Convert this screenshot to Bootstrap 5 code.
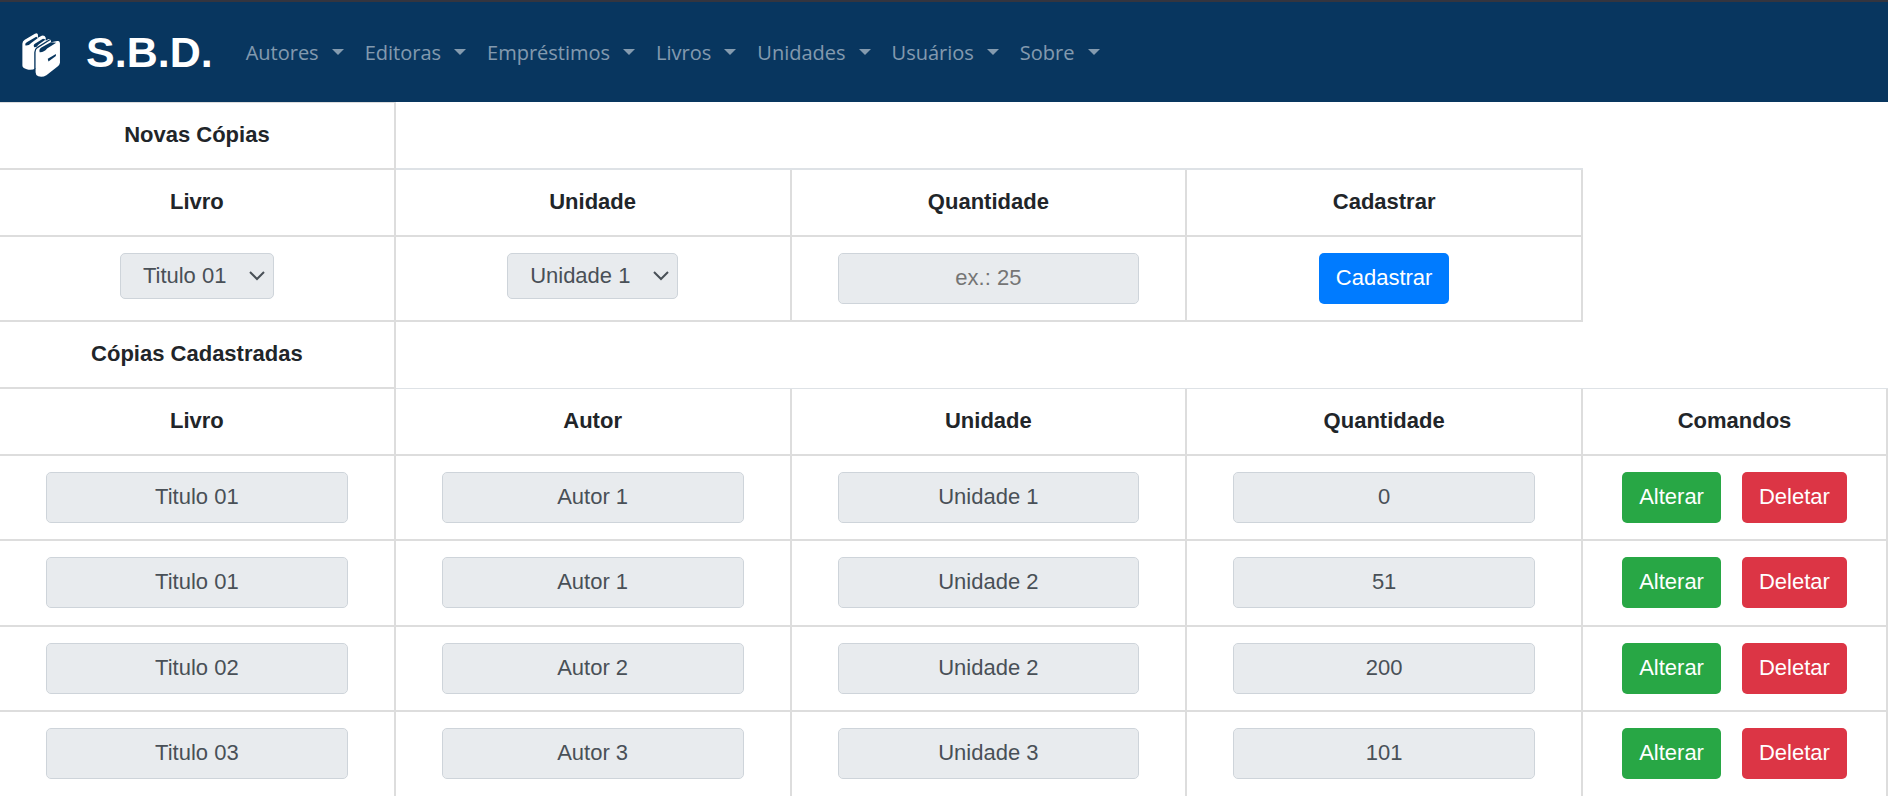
<!DOCTYPE html>
<html lang="pt-BR">
<head>
<meta charset="utf-8">
<meta name="viewport" content="width=device-width, initial-scale=1">
<title>S.B.D. - Cópias</title>
<link href="https://cdn.jsdelivr.net/npm/bootstrap@5.3.0/dist/css/bootstrap.min.css" rel="stylesheet">
<style>
  body { font-family: "Liberation Sans", Arial, sans-serif; font-size: 22px; line-height: 33px; color: #212529; overflow-x: hidden; }

  .sbd-nav { background: #08365f; border-top: 2px solid #34353f; padding: 0 22px; min-height: 102px; }
  .sbd-nav .navbar-brand { color: #fff; font-size: 43px; font-weight: 700; line-height: 48px; gap: 26px; margin-right: 25px; padding: 0 0 1px; }
  .sbd-nav .marca { margin-top: 6px; }
  .sbd-nav .navbar-nav { column-gap: 5px; }
  .sbd-nav .nav-link { font-family: "Open Sans", "Segoe UI", sans-serif; font-size: 20px; line-height: 32px; color: rgba(255, 255, 255, .5); padding: 10px 8px 8px; }
  .sbd-nav .dropdown-toggle::after { border-top-width: 6px; border-right-width: 6px; border-left-width: 6px; margin-left: 13px; vertical-align: 5px; }

  .copias { width: 100%; table-layout: fixed; border-collapse: separate; border-spacing: 0; text-align: center; }
  .copias .comandos { width: 305px; }
  .copias th, .copias td { padding: 16px 0; border: 0 solid #ddd; border-width: 0 2px 2px 0; vertical-align: top; }
  .copias th { padding: 15px 0 17px; }
  .copias .campo { padding: 16px 46px; }
  .copias .registros tr:nth-child(even) td { padding-bottom: 17px; }
  .copias .topo { border-top-width: 1px; }
  .copias .vazio { border-width: 0; }
  .copias .linha { border-width: 0 0 2px; border-color: #dee2e6; }
  .copias .linha-fina { border-width: 0 0 1px; border-color: #dee2e6; }

  .copias .form-control, .copias .form-select { font-size: 22px; color: #495057; background-color: #e8ebee; border: 1px solid #ced4da; border-radius: 5px; }
  .copias .form-control { height: 51px; padding: 0 16px 1px; text-align: center; }
  .copias .form-control::placeholder { color: #757575; }
  .copias .form-select { width: auto; height: 46px; margin: 0 auto; padding: 0 46px 1px 22px; line-height: 33px;
    background-image: url("data:image/svg+xml,%3Csvg xmlns='http://www.w3.org/2000/svg' viewBox='0 0 16 10'%3E%3Cpath d='M1 1l7 7 7-7' fill='none' stroke='%23495057' stroke-width='2'/%3E%3C/svg%3E");
    background-size: 16px 10px; background-position: right 8px center; }
  .copias .btn { height: 51px; padding: 0 16px 2px; border: 1px solid transparent; border-radius: 5px; font-size: 22px; line-height: 33px; color: #fff; }
  .copias .btn-cadastrar { background: #007bff; }
  .copias .btn-alterar { background: #28a745; }
  .copias .btn-deletar { background: #dc3545; }
  .acoes { gap: 21px; }
</style>
</head>
<body>
<nav class="navbar navbar-expand-lg sbd-nav">
  <a class="navbar-brand d-flex align-items-center" href="#">
    <svg class="marca" width="38" height="44" viewBox="0 0 112 130" aria-hidden="true">
      <path fill="#fff" d="M1 32Q1 24 8 20L38 2Q46-2 47 5V14L58 8Q67 6 70 14V23L78 18Q85 18 86 27L104 24Q112 21 112 31V88Q111 95 105 99L72 125Q60 132 48 128Q40 125 40 116V104Q28 112 14 107Q1 104 1 96Z"/>
      <g fill="#08365f">
        <path d="M10 37Q7 31 14 27L42 11L47 15L28 29Q21 38 10 37Z"/>
        <path d="M36 42Q32 35 39 31L62 17L70 19L50 33Q44 42 36 42Z"/>
        <path d="M52 57Q49 48 57 43L85 27L101 29L74 46Q64 58 52 57Z"/>
        <path d="M76 76L100 62V68L78 84Z"/>
      </g>
      <path d="M38 106V57Q38 48 45 43L82 20" fill="none" stroke="#08365f" stroke-width="4"/>
    </svg>
    <span>S.B.D.</span>
  </a>
  <ul class="navbar-nav flex-row flex-wrap">
    <li class="nav-item dropdown"><a class="nav-link dropdown-toggle" href="#" role="button" data-bs-toggle="dropdown">Autores</a></li>
    <li class="nav-item dropdown"><a class="nav-link dropdown-toggle" href="#" role="button" data-bs-toggle="dropdown">Editoras</a></li>
    <li class="nav-item dropdown"><a class="nav-link dropdown-toggle" href="#" role="button" data-bs-toggle="dropdown">Empréstimos</a></li>
    <li class="nav-item dropdown"><a class="nav-link dropdown-toggle" href="#" role="button" data-bs-toggle="dropdown">Livros</a></li>
    <li class="nav-item dropdown"><a class="nav-link dropdown-toggle" href="#" role="button" data-bs-toggle="dropdown">Unidades</a></li>
    <li class="nav-item dropdown"><a class="nav-link dropdown-toggle" href="#" role="button" data-bs-toggle="dropdown">Usuários</a></li>
    <li class="nav-item dropdown"><a class="nav-link dropdown-toggle" href="#" role="button" data-bs-toggle="dropdown">Sobre</a></li>
  </ul>
</nav>

<main>
<table class="copias">
  <colgroup><col><col><col><col><col class="comandos"></colgroup>
  <tbody>
    <tr><th class="topo">Novas Cópias</th><td class="linha" colspan="3"></td><td class="vazio"></td></tr>
    <tr>
      <th id="novo-livro">Livro</th><th id="novo-unidade">Unidade</th><th id="novo-quantidade">Quantidade</th><th>Cadastrar</th><td class="vazio"></td>
    </tr>
    <tr>
      <td><select class="form-select" aria-labelledby="novo-livro"><option>Titulo 01</option></select></td>
      <td><select class="form-select" aria-labelledby="novo-unidade"><option>Unidade 1</option></select></td>
      <td class="campo"><input class="form-control" type="text" placeholder="ex.: 25" aria-labelledby="novo-quantidade"></td>
      <td><button class="btn btn-cadastrar d-block mx-auto" type="button">Cadastrar</button></td>
      <td class="vazio"></td>
    </tr>
    <tr><th>Cópias Cadastradas</th><td class="linha-fina" colspan="4"></td></tr>
    <tr>
      <th id="livro">Livro</th><th id="autor">Autor</th><th id="unidade">Unidade</th><th id="quantidade">Quantidade</th><th>Comandos</th>
    </tr>
  </tbody>
  <tbody class="registros">
    <tr>
      <td class="campo"><input class="form-control" readonly value="Titulo 01" aria-labelledby="livro"></td>
      <td class="campo"><input class="form-control" readonly value="Autor 1" aria-labelledby="autor"></td>
      <td class="campo"><input class="form-control" readonly value="Unidade 1" aria-labelledby="unidade"></td>
      <td class="campo"><input class="form-control" readonly value="0" aria-labelledby="quantidade"></td>
      <td><div class="acoes d-flex justify-content-center"><button class="btn btn-alterar" type="button">Alterar</button><button class="btn btn-deletar" type="button">Deletar</button></div></td>
    </tr>
    <tr>
      <td class="campo"><input class="form-control" readonly value="Titulo 01" aria-labelledby="livro"></td>
      <td class="campo"><input class="form-control" readonly value="Autor 1" aria-labelledby="autor"></td>
      <td class="campo"><input class="form-control" readonly value="Unidade 2" aria-labelledby="unidade"></td>
      <td class="campo"><input class="form-control" readonly value="51" aria-labelledby="quantidade"></td>
      <td><div class="acoes d-flex justify-content-center"><button class="btn btn-alterar" type="button">Alterar</button><button class="btn btn-deletar" type="button">Deletar</button></div></td>
    </tr>
    <tr>
      <td class="campo"><input class="form-control" readonly value="Titulo 02" aria-labelledby="livro"></td>
      <td class="campo"><input class="form-control" readonly value="Autor 2" aria-labelledby="autor"></td>
      <td class="campo"><input class="form-control" readonly value="Unidade 2" aria-labelledby="unidade"></td>
      <td class="campo"><input class="form-control" readonly value="200" aria-labelledby="quantidade"></td>
      <td><div class="acoes d-flex justify-content-center"><button class="btn btn-alterar" type="button">Alterar</button><button class="btn btn-deletar" type="button">Deletar</button></div></td>
    </tr>
    <tr>
      <td class="campo"><input class="form-control" readonly value="Titulo 03" aria-labelledby="livro"></td>
      <td class="campo"><input class="form-control" readonly value="Autor 3" aria-labelledby="autor"></td>
      <td class="campo"><input class="form-control" readonly value="Unidade 3" aria-labelledby="unidade"></td>
      <td class="campo"><input class="form-control" readonly value="101" aria-labelledby="quantidade"></td>
      <td><div class="acoes d-flex justify-content-center"><button class="btn btn-alterar" type="button">Alterar</button><button class="btn btn-deletar" type="button">Deletar</button></div></td>
    </tr>
  </tbody>
</table>
</main>
<script src="https://cdn.jsdelivr.net/npm/bootstrap@5.3.0/dist/js/bootstrap.bundle.min.js"></script>
</body>
</html>
